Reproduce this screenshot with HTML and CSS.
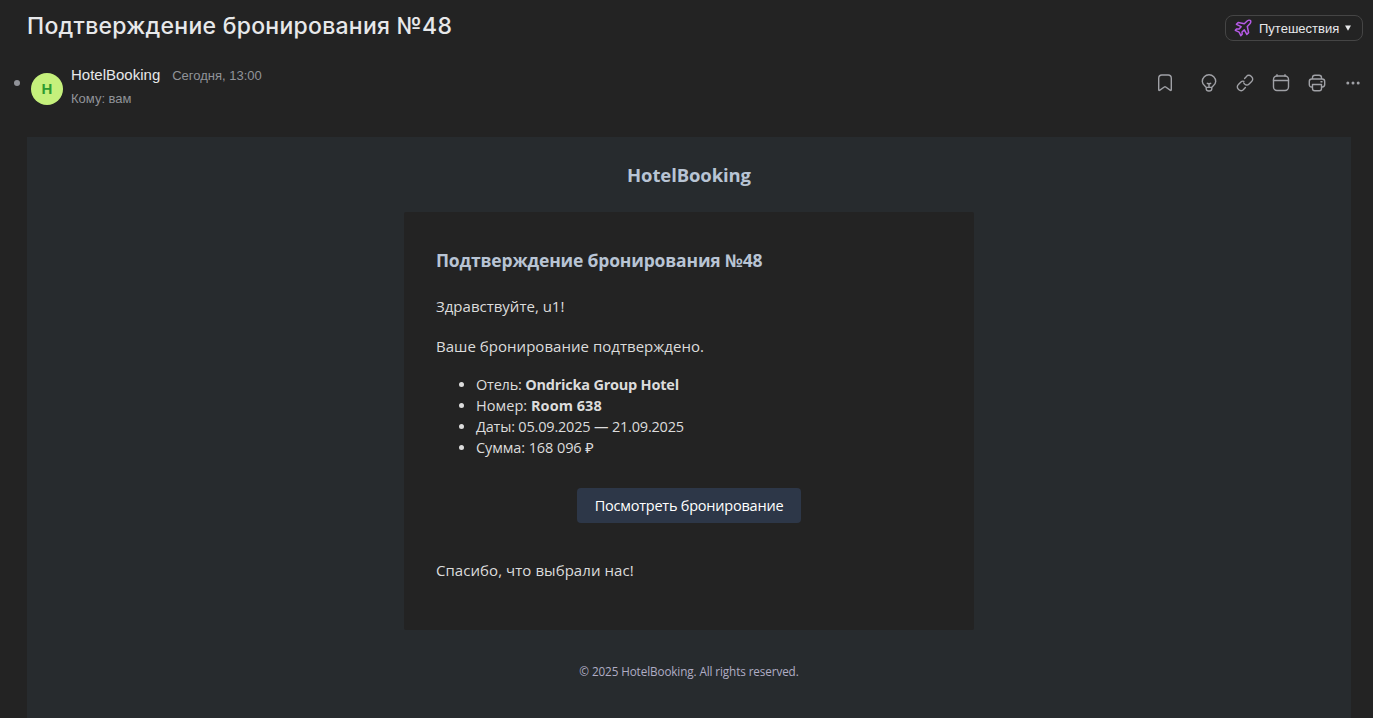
FILE: index.html
```
<!DOCTYPE html>
<html lang="ru">
<head>
<meta charset="utf-8">
<title>Подтверждение бронирования №48</title>
<link rel="stylesheet" href="styles.css">
</head>
<body>
<header class="topbar">
  <h1 class="subject">Подтверждение бронирования №48</h1>
  <button class="category">
    <svg class="plane" viewBox="0 0 18 18"><path d="M10.300 4.800 12.900 2.300C14 1.200 15.900 1 16.500 1.600S16.800 3.900 15.700 5L13.300 7.500 14.600 13.600 12.800 15.400 10.300 10.900 8 13 8.200 15.200 6.800 16.600 5.100 13.200 1.300 11.300 2.700 9.900 5.100 10.100 7.100 7.700 2.400 5.300 4.200 3.500Z"/></svg>
    <span class="category-name">Путешествия</span>
    <svg class="caret" viewBox="0 0 6 6"><path d="M0 .5h6L3 5.800Z"/></svg>
  </button>
</header>
<section class="letter-head">
  <span class="unread-dot"></span>
  <span class="avatar">H</span>
  <div class="people">
    <div class="from"><span class="sender">HotelBooking</span><span class="date">Сегодня, 13:00</span></div>
    <div class="to">Кому: вам</div>
  </div>
  <nav class="actions">
    <svg class="bookmark" viewBox="0 0 20 20"><path d="M3.700 5.200Q3.700 2 6.900 2h6.200q3.200 0 3.200 3.200v11.300q0 1.500-1.200.6L10.700 14q-.7-.5-1.400 0l-4.400 3.100q-1.200.9-1.200-.6Z"/></svg>
    <svg viewBox="0 0 20 20"><path d="M7.200 14.400C6.600 13 3.300 11.700 3.300 8.400a6.700 6.700 0 0 1 13.400 0c0 3.300-3.300 4.600-3.900 6ZM7.200 14.400v1.300q0 2.300 2.800 2.300t2.800-2.300v-1.300M10 14v-3.500M8.300 10.300 10 11.200l1.700-.9"/></svg>
    <svg viewBox="0 0 20 20"><path d="M9.600 5.400 11.500 3.400a3.200 3.200 0 0 1 4.600-.2l.7.7a3.200 3.200 0 0 1-.2 4.600l-2.500 2.500a3.200 3.200 0 0 1-4.500 0l-.9-1.100M10.400 14.600 8.500 16.600a3.200 3.200 0 0 1-4.600.2l-.7-.7a3.200 3.200 0 0 1 .2-4.600l2.500-2.500a3 3 0 0 1 3-.7"/></svg>
    <svg viewBox="0 0 20 20"><rect x="2.500" y="3" width="15" height="14.500" rx="3.500"/><path d="M2.500 7.500h15M6 1.800V3M14 1.800V3"/></svg>
    <svg viewBox="0 0 20 20"><path d="M5.500 14H4.700q-2.400 0-2.400-2.400V8.400Q2.300 6 4.700 6h10.600q2.400 0 2.400 2.400v3.200q0 2.400-2.400 2.400h-.8M5.500 6V4.700q0-2.400 2.400-2.400h4.200q2.400 0 2.400 2.400V6M5.500 11.500h9v4q0 2.200-2.200 2.200H7.700q-2.200 0-2.200-2.200ZM14 8.700h1"/></svg>
    <svg class="more" viewBox="0 0 20 20"><circle cx="4.800" cy="10" r="1.500"/><circle cx="10" cy="10" r="1.500"/><circle cx="15.200" cy="10" r="1.500"/></svg>
  </nav>
</section>
<main class="mail">
  <div class="brand">HotelBooking</div>
  <article class="card">
    <h2 class="card-title">Подтверждение бронирования №48</h2>
    <p class="hello">Здравствуйте, u1!</p>
    <p class="confirmed">Ваше бронирование подтверждено.</p>
    <ul class="details">
      <li class="hotel">Отель: <b>Ondricka Group Hotel</b></li>
      <li class="room">Номер: <b>Room 638</b></li>
      <li class="dates">Даты: 05.09.2025 — 21.09.2025</li>
      <li class="sum">Сумма: 168 096 ₽</li>
    </ul>
    <a class="view-button">Посмотреть бронирование</a>
    <p class="thanks">Спасибо, что выбрали нас!</p>
  </article>
  <footer class="copyright">© 2025 HotelBooking. All rights reserved.</footer>
</main>
</body>
</html>
```
FILE: styles.css
```
* { box-sizing: border-box; }
body {
  margin: 0;
  height: 718px;
  overflow: hidden;
  display: flex;
  flex-direction: column;
  background: #232323;
  color: #e6e6e6;
  font-family: "Liberation Sans", Arial, sans-serif;
}
h1, h2, p, ul { margin: 0; }
.topbar {
  height: 56px;
  flex: none;
  padding: 0 10px 0 27px;
  display: flex;
  justify-content: space-between;
  align-items: center;
}
.subject {
  font: 500 23px/28px Inter, sans-serif;
  letter-spacing: .26px;
  color: #e7e8ea;
  padding-bottom: 4px;
}
.category {
  width: 138px;
  height: 26px;
  padding: 0 11px 0 8px;
  display: flex;
  align-items: center;
  background: none;
  border: 1px solid #454545;
  border-radius: 8px;
  color: #e7e8ea;
  font: 13px "Liberation Sans", Arial, sans-serif;
}
.plane { width: 18px; height: 18px; margin-right: 7px; fill: none; stroke: #b65ae6; stroke-width: 1.5; stroke-linejoin: round; }
.caret { width: 6px; height: 6px; margin-left: auto; fill: #e7e8ea; }
.letter-head {
  height: 81px;
  flex: none;
  display: flex;
  padding: 0 10px 0 14px;
}
.unread-dot { width: 6px; height: 6px; border-radius: 50%; background: #919399; margin: 24px 11px 0 0; }
.avatar {
  width: 32px;
  height: 32px;
  margin: 17px 8px 0 0;
  border-radius: 50%;
  background: #c5f07c;
  color: #2d9b31;
  font: bold 15px/32px "Liberation Sans", Arial, sans-serif;
  text-align: center;
}
.people { padding-top: 10px; }
.from { display: flex; gap: 12px; height: 19px; line-height: 20px; }
.sender { font-size: 15px; line-height: 18px; color: #e7e8ea; }
.date, .to { font-size: 13px; color: #919399; }
.to { line-height: 16px; padding-top: 6px; }
.actions { margin-left: auto; display: flex; gap: 16px; padding-top: 17px; }
.actions svg { width: 20px; height: 20px; fill: none; stroke: #a0a1a6; stroke-width: 1.4; stroke-linecap: round; stroke-linejoin: round; }
.actions .bookmark { margin-right: 8px; }
.actions .more { fill: #a0a1a6; stroke: none; }
.mail {
  flex: 1;
  margin: 0 22px 0 27px;
  display: flex;
  flex-direction: column;
  align-items: center;
  background: #272b2e;
  font-family: "Open Sans", "Noto Sans", sans-serif;
}
.brand { height: 75px; line-height: 75px; font-size: 18.5px; letter-spacing: -.12px; font-weight: 700; color: #b8c4d4; }
.card {
  width: 570px;
  height: 418px;
  padding: 31px 32px;
  display: flex;
  flex-direction: column;
  background: #232323;
  border-radius: 2px;
  font-size: 15px;
  color: #dcdcdc;
}
.card-title { font-size: 17.5px; letter-spacing: -.17px; line-height: 34px; font-weight: 700; color: #b8c4d4; }
.hello { line-height: 24px; margin-top: 17px; }
.confirmed { line-height: 24px; margin-top: 16px; letter-spacing: .03px; }
.details { margin-top: 16px; padding-left: 40px; line-height: 21px; font-size: 14.5px; }
.hotel { letter-spacing: -.22px; }
.room { letter-spacing: .05px; }
.dates { letter-spacing: -.19px; }
.sum { letter-spacing: -.09px; }
.view-button {
  align-self: center;
  width: 224px;
  height: 35px;
  margin-top: 30px;
  background: #2d3748;
  border-radius: 4px;
  color: #fff;
  font-size: 14.5px;
  letter-spacing: -.22px;
  text-align: center;
  line-height: 35px;
}
.thanks { line-height: 24px; margin-top: 35px; letter-spacing: .06px; }
.copyright { line-height: 18px; font-size: 11.7px; letter-spacing: -.1px; margin-top: 32px; color: #b0adc5; }
```
